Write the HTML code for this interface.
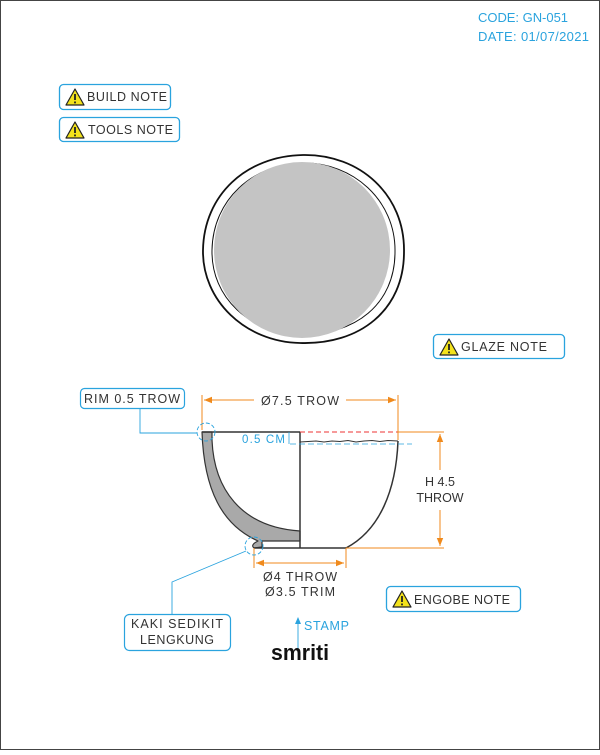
<!DOCTYPE html>
<html><head><meta charset="utf-8"><style>
html,body{margin:0;padding:0;background:#fff}
body{width:600px;height:750px;overflow:hidden;font-family:"Liberation Sans",sans-serif}
svg text{font-family:"Liberation Sans",sans-serif}
</style></head><body>
<svg width="600" height="750" viewBox="0 0 600 750" xmlns="http://www.w3.org/2000/svg">
<defs>
<g id="warn"><path d="M0 -8 L9 8 L-9 8 Z" fill="#f3e21c" stroke="#222" stroke-width="1.2" stroke-linejoin="round"/><rect x="-0.9" y="-3" width="1.8" height="6" fill="#222"/><rect x="-0.9" y="4.5" width="1.8" height="1.8" fill="#222"/></g>
<marker id="ar" viewBox="0 0 10 10" refX="10" refY="5" markerWidth="8" markerHeight="8" orient="auto-start-reverse"><path d="M0 1 L10 5 L0 9 Z" fill="#f08a1c"/></marker>
</defs>
<rect x="0.5" y="0.5" width="599" height="749" fill="#fff" stroke="#444" stroke-width="1"/>
<text x="478" y="22" font-size="13" fill="#2aa3de" textLength="90">CODE: GN-051</text>
<text x="478" y="41" font-size="13" fill="#2aa3de" textLength="111">DATE: 01/07/2021</text>
<g font-size="12.5" fill="#333">
<rect x="59.5" y="84.5" width="111" height="25" rx="4" fill="#fff" stroke="#2aa3de" stroke-width="1.3"/>
<use href="#warn" x="75" y="97"/><text x="87" y="101" textLength="80">BUILD NOTE</text>
<rect x="59.5" y="117.5" width="120" height="24" rx="4" fill="#fff" stroke="#2aa3de" stroke-width="1.3"/>
<use href="#warn" x="75" y="130"/><text x="88" y="134" textLength="85">TOOLS NOTE</text>
<rect x="433.5" y="334.5" width="131" height="24" rx="4" fill="#fff" stroke="#2aa3de" stroke-width="1.3"/>
<use href="#warn" x="449" y="347"/><text x="461" y="351" textLength="86">GLAZE NOTE</text>
<rect x="386.5" y="586.5" width="134" height="25" rx="4" fill="#fff" stroke="#2aa3de" stroke-width="1.3"/>
<use href="#warn" x="402" y="599"/><text x="414" y="604" textLength="96">ENGOBE NOTE</text>
</g>
<path d="M303 155 C360 154 405 195 404 252 C404 310 360 345 300 343 C245 342 202 300 203 250 C204 195 246 156 303 155 Z" fill="#fff" stroke="#111" stroke-width="1.8"/>
<path d="M303 163 C352 162 396 200 395 252 C395 304 355 336 300 334 C250 333 211 298 212 250 C213 200 252 164 303 163 Z" fill="#fff" stroke="#111" stroke-width="1"/>
<circle cx="302" cy="250" r="88" fill="#c4c4c4"/>
<!-- bowl -->
<path d="M202 432 L212 432 L212 440 C214 488 240 527 300 531 L300 541 L262 541 L262 547 L254 548 C250 545 256 542 258 541 C222 525 204 490 202 432 Z" fill="#a9a9a9" stroke="#333" stroke-width="1.2" stroke-linejoin="round"/>
<line x1="202" y1="432" x2="300" y2="432" stroke="#333" stroke-width="1.5"/>
<line x1="300" y1="432" x2="300" y2="548" stroke="#333" stroke-width="1.5"/>
<line x1="254" y1="548" x2="346" y2="548" stroke="#333" stroke-width="1.5"/>
<path d="M398 441 C396 490 380 530 346 548" fill="none" stroke="#333" stroke-width="1.5"/>
<path d="M300 442 L308 441.5 L316 441 L324 442 L332 441 L340 441.5 L348 440.5 L356 442 L364 441 L372 440.5 L380 441.5 L388 440.5 L398 441" fill="none" stroke="#333" stroke-width="1.1"/>
<line x1="300" y1="432" x2="398" y2="432" stroke="#e33" stroke-width="1" stroke-dasharray="5,3"/>
<line x1="398" y1="432" x2="398" y2="441" stroke="#e33" stroke-width="1" stroke-dasharray="3,2"/>
<line x1="290" y1="444" x2="412" y2="444" stroke="#2aa3de" stroke-width="0.8" stroke-dasharray="6,3"/>
<line x1="289" y1="432" x2="289" y2="444" stroke="#2aa3de" stroke-width="0.8"/>
<text x="242" y="443" font-size="11.5" fill="#2aa3de" textLength="43">0.5 CM</text>
<g stroke="#f08a1c" stroke-width="1" fill="none">
<line x1="202" y1="395" x2="202" y2="430"/><line x1="398" y1="395" x2="398" y2="440"/>
<line x1="204" y1="400" x2="254" y2="400" marker-start="url(#ar)"/><line x1="346" y1="400" x2="396" y2="400" marker-end="url(#ar)"/>
<line x1="398" y1="432" x2="444" y2="432"/><line x1="346" y1="548" x2="444" y2="548"/>
<line x1="440" y1="434" x2="440" y2="470" marker-start="url(#ar)"/><line x1="440" y1="510" x2="440" y2="546" marker-end="url(#ar)"/>
<line x1="254" y1="548" x2="254" y2="568"/><line x1="346" y1="548" x2="346" y2="568"/>
<line x1="256" y1="563" x2="344" y2="563" marker-start="url(#ar)" marker-end="url(#ar)"/>
</g>
<g font-size="12.5" fill="#333" text-anchor="middle">
<text x="300" y="405" textLength="78">Ø7.5 TROW</text>
<text x="440" y="486">H 4.5</text><text x="440" y="502">THROW</text>
<text x="300" y="581" textLength="74">Ø4 THROW</text><text x="300" y="596" textLength="70">Ø3.5 TRIM</text>
</g>
<g stroke="#2aa3de" stroke-width="0.9" fill="none">
<circle cx="206" cy="432" r="9" stroke-dasharray="4,2"/>
<circle cx="254" cy="546" r="9" stroke-dasharray="4,2"/>
<polyline points="140,408 140,433 197,433"/>
<polyline points="246,551 172,582 172,615"/>
<rect x="80.5" y="388.5" width="104" height="20" rx="4" stroke-width="1.2"/>
<rect x="124.5" y="614.5" width="106" height="36" rx="5" stroke-width="1.2"/>
<line x1="298" y1="650" x2="298" y2="623"/>
</g>
<path d="M298 617 L295 624 L301 624 Z" fill="#2aa3de"/>
<text x="84" y="403" font-size="12.5" fill="#333" textLength="96">RIM 0.5 TROW</text>
<text x="177" y="628" font-size="12.5" fill="#333" text-anchor="middle" textLength="92">KAKI SEDIKIT</text>
<text x="177" y="644" font-size="12.5" fill="#333" text-anchor="middle" textLength="74">LENGKUNG</text>
<text x="304" y="630" font-size="12.5" fill="#2aa3de" textLength="45">STAMP</text>
<text x="300" y="660" font-size="22" font-weight="bold" fill="#111" text-anchor="middle" textLength="58" lengthAdjust="spacingAndGlyphs">smriti</text>
</svg>
</body></html>
